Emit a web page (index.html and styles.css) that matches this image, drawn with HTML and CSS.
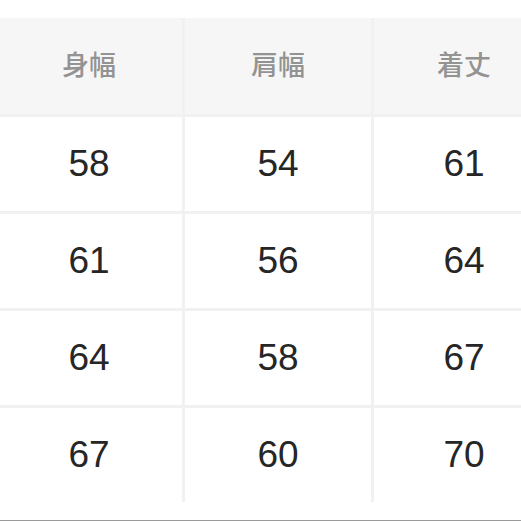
FILE: index.html
```html
<!DOCTYPE html>
<html lang="ja">
<head>
<meta charset="utf-8">
<link rel="stylesheet" href="styles.css">
</head>
<body>
<div class="page">
  <div class="table">
    <div class="cell head">身幅</div>
    <div class="cell head">肩幅</div>
    <div class="cell head">着丈</div>
    <div class="cell">58</div>
    <div class="cell">54</div>
    <div class="cell">61</div>
    <div class="cell">61</div>
    <div class="cell">56</div>
    <div class="cell">64</div>
    <div class="cell">64</div>
    <div class="cell">58</div>
    <div class="cell">67</div>
    <div class="cell">67</div>
    <div class="cell">60</div>
    <div class="cell">70</div>
  </div>
  <div class="rule"></div>
</div>
</body>
</html>
```
FILE: styles.css
```css
html, body {
  margin: 0;
  padding: 0;
  background: #ffffff;
}
body {
  width: 521px;
  height: 521px;
  overflow: hidden;
}
.page {
  padding-top: 18px;
  width: 521px;
  overflow: hidden;
}
.table {
  display: grid;
  grid-template-columns: 186px 186px 180px;
  grid-template-rows: 96px 94px 94px 94px 94px;
  column-gap: 3px;
  row-gap: 3px;
  margin-left: -4px;
  width: 558px;
  background: #f1f1f1;
}
.cell {
  display: flex;
  align-items: center;
  justify-content: center;
  background: #ffffff;
  font-family: "Liberation Sans", Arial, sans-serif;
  font-size: 37px;
  color: #262626;
}
.head {
  background: #f6f6f6;
  font-family: "Noto Sans CJK JP", "Noto Sans", sans-serif;
  font-size: 27px;
  font-weight: 500;
  color: #939393;
  padding-bottom: 6px;
  box-sizing: border-box;
}
.rule {
  margin-top: 18px;
  height: 1px;
  background: #9a9a9a;
}
```
